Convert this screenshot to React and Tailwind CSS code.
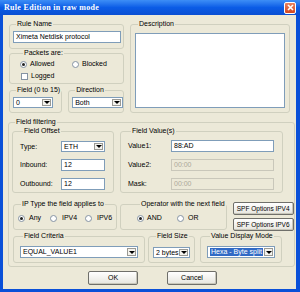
import React from "react";

// small helpers for the XP-style controls
const Group = ({ label, className = "", children }) => (
  <fieldset className={`border border-[#D0D0BF] rounded-[3px] ${className}`}>
    <legend className="ml-[3px] px-[1px] leading-[8px] whitespace-nowrap">{label}</legend>
    {children}
  </fieldset>
);

const Radio = ({ on }) => (
  <span className="w-[7px] h-[7px] rounded-full border border-[#8593A3] bg-white flex items-center justify-center shrink-0">
    {on && <span className="w-[3px] h-[3px] rounded-full bg-[#222]" />}
  </span>
);

const Check = () => (
  <span className="w-[7px] h-[7px] border border-[#8593A3] bg-white shrink-0" />
);

const Arrow = () => (
  <span className="w-0 h-0 border-l-[3px] border-r-[3px] border-t-[3px] border-l-transparent border-r-transparent border-t-black" />
);

const Combo = ({ value, className = "", selected }) => (
  <div className={`flex items-stretch border border-[#7F9DB9] bg-white ${className}`}>
    <div className="flex-1 flex items-center pl-[2px] overflow-hidden whitespace-nowrap">
      {selected ? (
        <span className="bg-[#316AC5] text-white px-[1px] leading-[8px]">{value}</span>
      ) : (
        value
      )}
    </div>
    <div className="w-[9px] m-[1px] ml-0 border border-[#9A9A94] bg-[#F4F3EE] flex items-center justify-center shrink-0">
      <Arrow />
    </div>
  </div>
);

const Input = ({ value, className = "", disabled }) => (
  <div
    className={`flex items-center pl-[2px] border whitespace-nowrap ${
      disabled
        ? "border-[#C9C7BA] bg-[#ECE9D8] text-[#ACA899]"
        : "border-[#7F9DB9] bg-white"
    } ${className}`}
  >
    {value}
  </div>
);

const Button = ({ children, className = "" }) => (
  <button className={`flex items-center justify-center whitespace-nowrap px-0 border border-[#6F6F6A] rounded-[2px] bg-linear-to-b from-white to-[#E6E5DE] shadow-[inset_-1px_-1px_0_#C9C7BA] ${className}`}>
    {children}
  </button>
);

const Row = ({ label, children, w }) => (
  <div className="flex items-center">
    <span className={`${w} shrink-0`}>{label}</span>
    {children}
  </div>
);

export default function App() {
  return (
    <div className="w-[300px] h-[292px] flex flex-col overflow-hidden font-['Liberation_Sans',Arial,sans-serif] text-[7px] leading-[8px] text-black bg-[#0A50D8]">
      {/* title bar */}
      <div className="h-[15px] shrink-0 flex items-center justify-between bg-linear-to-b from-[#3D8EF6] via-[#0B5CE6] to-[#0A4FD2] pl-[4px] pr-[4px]">
        <span className="font-['Liberation_Serif',serif] font-bold text-[8px] text-white tracking-[0.3px]">
          Rule Edition in raw mode
        </span>
        <span className="w-[12px] h-[12px] rounded-[2px] border border-white bg-linear-to-b from-[#E8825F] to-[#D2461E] flex items-center justify-center">
          <svg width="7" height="7" viewBox="0 0 7 7">
            <path d="M1 1L6 6M6 1L1 6" stroke="white" strokeWidth="1.6" />
          </svg>
        </span>
      </div>

      {/* client area */}
      <div className="flex-1 ml-[3px] mr-[4px] mb-[3px] bg-[#ECE9D8] flex flex-col pt-[5px]">
        {/* top section */}
        <div className="flex ml-[6px] gap-[6px]">
          <div className="w-[115px] flex flex-col">
            <Group label="Rule Name" className="h-[29px] pl-[3px] pt-[3px]">
              <Input value="Ximeta Netdisk protocol" className="w-[108px] h-[12px]" />
            </Group>
            <Group label="Packets are:" className="h-[35px] pl-[10px] pt-[3px] flex flex-col gap-[4px]">
              <div className="flex items-center h-[8px]">
                <span className="w-[52px] flex items-center gap-[3px]">
                  <Radio on /> Allowed
                </span>
                <span className="flex items-center gap-[3px]">
                  <Radio /> Blocked
                </span>
              </div>
              <div className="flex items-center h-[8px] gap-[3px] pl-[1px]">
                <Check /> Logged
              </div>
            </Group>
            <div className="flex gap-[6px] mt-[2px]">
              <Group label="Field (0 to 15)" className="w-[49px] h-[27px] pl-[3px] pt-[3px]">
                <Combo value="0" className="w-[40px] h-[11px]" />
              </Group>
              <Group label="Direction" className="w-[60px] h-[27px] pl-[3px] pt-[3px]">
                <Combo value="Both" className="w-[51px] h-[11px]" />
              </Group>
            </div>
          </div>
          <Group label="Description" className="w-[160px] h-[93px] pl-[4px] pt-[5px]">
            <div className="w-[150px] h-[75px] bg-white border border-[#7F9DB9]" />
          </Group>
        </div>

        {/* field filtering */}
        <Group label="Field filtering" className="ml-[5px] mt-[5px] w-[283px] h-[149px] pl-[3px] pt-[1px] flex flex-col">
          <div className="flex gap-[6px]">
            <Group label="Field Offset" className="w-[102px] h-[66px] pl-[7px] pt-[6px] flex flex-col gap-[7px]">
              <Row label="Type:" w="w-[41px]">
                <Combo value="ETH" className="w-[44px] h-[11px]" />
              </Row>
              <Row label="Inbound:" w="w-[41px]">
                <Input value="12" className="w-[44px] h-[12px]" />
              </Row>
              <Row label="Outbound:" w="w-[41px]">
                <Input value="12" className="w-[44px] h-[12px]" />
              </Row>
            </Group>
            <Group label="Field Value(s)" className="w-[163px] h-[66px] pl-[7px] pt-[5px] flex flex-col gap-[7px]">
              <Row label="Value1:" w="w-[43px]">
                <Input value="88:AD" className="w-[103px] h-[12px]" />
              </Row>
              <Row label="Value2:" w="w-[43px]">
                <Input value="00:00" disabled className="w-[103px] h-[12px]" />
              </Row>
              <Row label="Mask:" w="w-[43px]">
                <Input value="00:00" disabled className="w-[103px] h-[12px]" />
              </Row>
            </Group>
          </div>

          <div className="flex mt-[7px] pl-[1px]">
            <Group label="IP Type the field applies to" className="w-[104px] h-[30px] pl-[4px] pt-[6px]">
              <div className="flex items-center h-[8px]">
                <span className="w-[32px] flex items-center gap-[4px]">
                  <Radio on /> Any
                </span>
                <span className="w-[35px] flex items-center gap-[5px]">
                  <Radio /> IPV4
                </span>
                <span className="flex items-center gap-[5px]">
                  <Radio /> IPV6
                </span>
              </div>
            </Group>
            <Group label="Operator with the next field" className="ml-[3px] w-[95px] h-[30px] pl-[16px] pt-[6px]">
              <div className="flex items-center h-[8px]">
                <span className="w-[40px] flex items-center gap-[3px]">
                  <Radio on /> AND
                </span>
                <span className="flex items-center gap-[4px]">
                  <Radio /> OR
                </span>
              </div>
            </Group>
            <div className="ml-[6px] mt-[2px] flex flex-col gap-[3px]">
              <Button className="w-[61px] h-[13px] text-[6.5px]">SPF Options IPV4</Button>
              <Button className="w-[61px] h-[13px] text-[6.5px]">SPF Options IPV6</Button>
            </div>
          </div>

          <div className="flex mt-[1px] pl-[1px]">
            <Group label="Field Criteria" className="w-[132px] h-[31px] pl-[6px] pt-[6px]">
              <Combo value="EQUAL_VALUE1" className="w-[118px] h-[12px]" />
            </Group>
            <Group label="Field Size" className="ml-[3px] w-[47px] h-[31px] pl-[4px] pt-[7px]">
              <Combo value="2 bytes" className="w-[37px] h-[11px]" />
            </Group>
            <Group label="Value Display Mode" className="ml-[5px] w-[82px] h-[31px] pl-[6px] pt-[6px]">
              <Combo value="Hexa - Byte split" selected className="w-[68px] h-[12px]" />
            </Group>
          </div>
        </Group>

        {/* dialog buttons */}
        <div className="flex ml-[85px] mt-[4px] gap-[29px]">
          <Button className="w-[50px] h-[14px]">OK</Button>
          <Button className="w-[50px] h-[14px]">Cancel</Button>
        </div>
      </div>
    </div>
  );
}
